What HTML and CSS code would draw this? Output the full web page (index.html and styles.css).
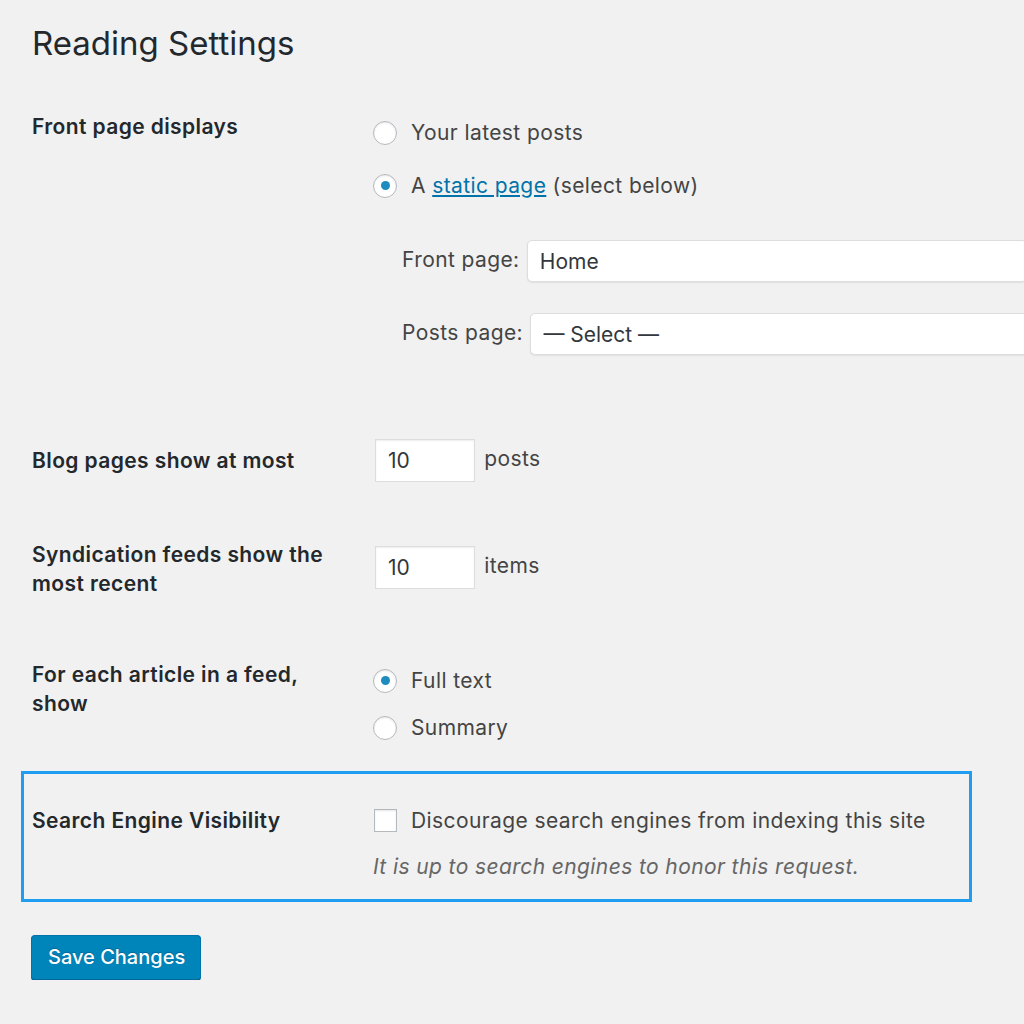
FILE: index.html
```html
<!DOCTYPE html>
<html lang="en">
<head>
  <meta charset="UTF-8">
  <title>Reading Settings</title>
  <link rel="stylesheet" href="styles.css">
</head>
<body>
  <div class="wrap">
    <h1>Reading Settings</h1>
    <form class="form-table">
      <div class="row row-front">
        <div class="th">Front page displays</div>
        <div class="td">
          <label class="opt"><input type="radio" name="show_on_front"><span>Your latest posts</span></label>
          <label class="opt"><input type="radio" name="show_on_front" checked><span>A <a href="#">static page</a> (select below)</span></label>
          <div class="page-select first">
            <label>Front page: <select><option>Home</option></select></label>
          </div>
          <div class="page-select">
            <label>Posts page: <select><option>&mdash; Select &mdash;</option></select></label>
          </div>
        </div>
      </div>

      <div class="row row-posts">
        <div class="th">Blog pages show at most</div>
        <div class="td">
          <input class="small-text" type="text" value="10"> posts
        </div>
      </div>

      <div class="row row-feed">
        <div class="th">Syndication feeds show the most recent</div>
        <div class="td">
          <input class="small-text" type="text" value="10"> items
        </div>
      </div>

      <div class="row row-article">
        <div class="th">For each article in a feed, show</div>
        <div class="td">
          <label class="opt"><input type="radio" name="rss_use_excerpt" checked><span>Full text</span></label>
          <label class="opt"><input type="radio" name="rss_use_excerpt"><span>Summary</span></label>
        </div>
      </div>

      <div class="row row-search">
        <div class="th">Search Engine Visibility</div>
        <div class="td">
          <label class="opt"><input type="checkbox"><span>Discourage search engines from indexing this site</span></label>
          <p class="description">It is up to search engines to honor this request.</p>
        </div>
      </div>

      <button type="button" class="button-primary">Save Changes</button>
    </form>
  </div>
</body>
</html>
```

FILE: styles.css
```css
html {
  overflow: hidden;
}
body {
  margin: 0;
  background: #f1f1f1;
  color: #444;
  font-family: Inter, "Noto Sans", sans-serif;
  font-size: 21px;
  letter-spacing: 0.4px;
  line-height: 29px;
}
.wrap {
  padding: 0 0 0 32px;
}
h1 {
  margin: 0;
  padding-top: 22px;
  font-size: 33px;
  font-weight: 400;
  letter-spacing: 0;
  line-height: 42px;
  color: #23282d;
}
.row {
  display: grid;
  grid-template-columns: 341px 1fr;
}
.th {
  font-weight: 600;
  color: #23282d;
  width: 305px;
}
.td {
  padding-top: 6px;
}
.opt {
  display: flex;
  align-items: center;
  gap: 14px;
}
.opt + .opt {
  margin-top: 24px;
}
a {
  color: #0073aa;
}

/* radios and checkbox */
input[type=radio],
input[type=checkbox] {
  appearance: none;
  margin: 0;
  width: 24px;
  height: 24px;
  flex: none;
  background: #fff;
  border: 1px solid #b4b9be;
  box-shadow: inset 0 1px 2px rgba(0,0,0,0.1);
  display: grid;
  place-items: center;
}
input[type=radio] {
  border-radius: 50%;
}
input[type=radio]:checked::before {
  content: "";
  width: 9px;
  height: 9px;
  border-radius: 50%;
  background: #1e8cbe;
}
input[type=checkbox] {
  width: 23px;
  height: 23px;
  margin-left: 1px;
  border-radius: 0;
}

/* page dropdowns */
.page-select {
  padding-left: 29px;
  margin-top: 31px;
  white-space: nowrap;
}
.page-select.first {
  margin-top: 40px;
}
select {
  appearance: none;
  font: inherit;
  color: #32373c;
  width: 500px;
  height: 42px;
  margin: 0 0 0 1px;
  padding: 0 12px;
  background: #fff;
  border: 1px solid #ddd;
  border-radius: 5px;
  box-shadow: 0 1px 2px rgba(0,0,0,0.07);
  vertical-align: middle;
}

/* number fields */
.small-text {
  font: inherit;
  color: #32373c;
  width: 100px;
  height: 43px;
  box-sizing: border-box;
  padding: 0 12px;
  margin: 0 3px 0 2px;
  background: #fff;
  border: 1px solid #ddd;
  box-shadow: inset 0 1px 2px rgba(0,0,0,0.07);
  vertical-align: middle;
}

.row-front {
  margin-top: 48px;
}
.row-posts {
  margin-top: 84px;
  align-items: center;
}
.row-posts .td {
  padding-top: 0;
}
.row-feed {
  margin-top: 58px;
}
.row-article {
  margin-top: 62px;
}
.row-article .opt + .opt {
  margin-top: 18px;
}
.row-search {
  margin: 29px 0 0 -11px;
  width: 937px;
  padding: 32px 0 18px 8px;
  border: 3px solid #1e9df1;
}
.row-search .td {
  padding-top: 0;
}
.description {
  margin: 17px 0 0;
  font-style: italic;
  color: #666;
}

.button-primary {
  margin: 33px 0 0 -1px;
  height: 45px;
  padding: 0 15px 0 16px;
  font: inherit;
  font-size: 20px;
  font-weight: 500;
  letter-spacing: 0;
  color: #fff;
  background: #0085ba;
  border: 1px solid #0073aa;
  border-bottom-color: #006799;
  border-radius: 4px;
  box-shadow: 0 1px 0 #006799;
  text-shadow: 0 -1px 1px #006799;
  cursor: pointer;
}
```
